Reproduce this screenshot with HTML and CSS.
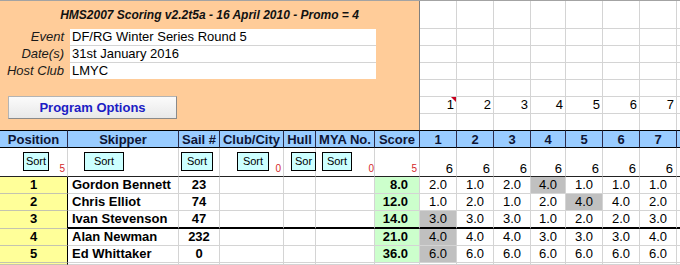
FILE: index.html
```html
<!DOCTYPE html>
<html>
<head>
<meta charset="utf-8">
<title>HMS2007 Scoring</title>
<link rel="stylesheet" href="styles.css">
</head>
<body>
<div class="sheet">
  <div class="panel">
    <div class="title">HMS2007 Scoring v2.2t5a - 16 April 2010 - Promo = 4</div>
    <div class="info">
      <div class="info-row"><span class="lbl">Event</span><span class="val">DF/RG Winter Series Round 5</span></div>
      <div class="info-row"><span class="lbl">Date(s)</span><span class="val">31st January 2016</span></div>
      <div class="info-row last"><span class="lbl">Host Club</span><span class="val">LMYC</span></div>
    </div>
    <button class="prog-btn">Program Options</button>
  </div>

  <div class="gc"></div><div class="gc"></div><div class="gc"></div><div class="gc"></div><div class="gc"></div><div class="gc"></div><div class="gc"></div><div class="gc edge"></div>
  <div class="gc"></div><div class="gc"></div><div class="gc"></div><div class="gc"></div><div class="gc"></div><div class="gc"></div><div class="gc"></div><div class="gc edge"></div>
  <div class="gc"></div><div class="gc"></div><div class="gc"></div><div class="gc"></div><div class="gc"></div><div class="gc"></div><div class="gc"></div><div class="gc edge"></div>
  <div class="gc"></div><div class="gc"></div><div class="gc"></div><div class="gc"></div><div class="gc"></div><div class="gc"></div><div class="gc"></div><div class="gc edge"></div>
  <div class="gc"></div><div class="gc"></div><div class="gc"></div><div class="gc"></div><div class="gc"></div><div class="gc"></div><div class="gc"></div><div class="gc edge"></div>
  <div class="gc num note">1</div><div class="gc num">2</div><div class="gc num">3</div><div class="gc num">4</div><div class="gc num">5</div><div class="gc num">6</div><div class="gc num">7</div><div class="gc edge"></div>
  <div class="gc nb"></div><div class="gc nb"></div><div class="gc nb"></div><div class="gc nb"></div><div class="gc nb"></div><div class="gc nb"></div><div class="gc nb"></div><div class="gc nb edge"></div>

  <div class="hd">Position</div>
  <div class="hd">Skipper</div>
  <div class="hd">Sail #</div>
  <div class="hd">Club/City</div>
  <div class="hd">Hull</div>
  <div class="hd">MYA No.</div>
  <div class="hd">Score</div>
  <div class="hd">1</div>
  <div class="hd">2</div>
  <div class="hd">3</div>
  <div class="hd">4</div>
  <div class="hd">5</div>
  <div class="hd">6</div>
  <div class="hd">7</div>
  <div class="hd edge"></div>

  <div class="srt"><span class="sort sort-pos">Sort</span><span class="cnt">5</span></div>
  <div class="srt"><span class="sort sort-skip">Sort</span></div>
  <div class="srt"><span class="sort sort-sail">Sort</span></div>
  <div class="srt"><span class="sort sort-club">Sort</span><span class="cnt">0</span></div>
  <div class="srt"><span class="sort sort-hull">Sor</span></div>
  <div class="srt"><span class="sort sort-mya">Sort</span><span class="cnt cnt-tight">0</span></div>
  <div class="srt"><span class="cnt">5</span></div>
  <div class="srt race">6</div>
  <div class="srt race">6</div>
  <div class="srt race">6</div>
  <div class="srt race">6</div>
  <div class="srt race">6</div>
  <div class="srt race">6</div>
  <div class="srt race">6</div>
  <div class="srt edge"></div>

  <div class="d pos">1</div><div class="d name">Gordon Bennett</div><div class="d sail">23</div><div class="d"></div><div class="d"></div><div class="d"></div><div class="d score">8.0</div>
  <div class="d r">2.0</div><div class="d r">1.0</div><div class="d r">2.0</div><div class="d r disc">4.0</div><div class="d r">1.0</div><div class="d r">1.0</div><div class="d r">1.0</div><div class="d edge"></div>

  <div class="d pos">2</div><div class="d name">Chris Elliot</div><div class="d sail">74</div><div class="d"></div><div class="d"></div><div class="d"></div><div class="d score">12.0</div>
  <div class="d r">1.0</div><div class="d r">2.0</div><div class="d r">1.0</div><div class="d r">2.0</div><div class="d r disc">4.0</div><div class="d r">4.0</div><div class="d r">2.0</div><div class="d edge"></div>

  <div class="d pos">3</div><div class="d name cut">Ivan Stevenson</div><div class="d sail cut">47</div><div class="d cut"></div><div class="d cut"></div><div class="d cut"></div><div class="d score cut">14.0</div>
  <div class="d r disc cut">3.0</div><div class="d r cut">3.0</div><div class="d r cut">3.0</div><div class="d r cut">1.0</div><div class="d r cut">2.0</div><div class="d r cut">2.0</div><div class="d r cut">3.0</div><div class="d edge cut"></div>

  <div class="d pos">4</div><div class="d name">Alan Newman</div><div class="d sail">232</div><div class="d"></div><div class="d"></div><div class="d"></div><div class="d score">21.0</div>
  <div class="d r disc">4.0</div><div class="d r">4.0</div><div class="d r">4.0</div><div class="d r">3.0</div><div class="d r">3.0</div><div class="d r">3.0</div><div class="d r">4.0</div><div class="d edge"></div>

  <div class="d pos">5</div><div class="d name">Ed Whittaker</div><div class="d sail">0</div><div class="d"></div><div class="d"></div><div class="d"></div><div class="d score">36.0</div>
  <div class="d r disc">6.0</div><div class="d r">6.0</div><div class="d r">6.0</div><div class="d r">6.0</div><div class="d r">6.0</div><div class="d r">6.0</div><div class="d r">6.0</div><div class="d edge"></div>

  <div class="d pos"></div><div class="d"></div><div class="d"></div><div class="d"></div><div class="d"></div><div class="d"></div><div class="d"></div>
  <div class="d"></div><div class="d"></div><div class="d"></div><div class="d"></div><div class="d"></div><div class="d"></div><div class="d"></div><div class="d edge"></div>
</div>
</body>
</html>
```

FILE: styles.css
```css
* { box-sizing: border-box; }

html, body {
  margin: 0;
  padding: 0;
  background: #ffffff;
}

body {
  font-family: "Liberation Sans", Arial, sans-serif;
  font-size: 13px;
  color: #000;
}

.sheet {
  width: 680px;
  height: 265px;
  overflow: hidden;
  display: grid;
  grid-template-columns: 68px 111px 41px 64px 32px 59px 45px 37px 37px 37px 35px 37px 37px 37px 3px;
  grid-template-rows: 28px 17px 17px 17px 17px 17px 16px 18px 29px 17px 17px 18px 17px 17px 1fr;
  border-top: 1px solid #a3a3a3;
}

/* ---------- orange header panel ---------- */
.panel {
  grid-column: 1 / 8;
  grid-row: 1 / 8;
  background: #ffcc99;
  border-right: 1px solid #7f7f7f;
  display: flex;
  flex-direction: column;
}

.title {
  height: 28px;
  line-height: 28px;
  text-align: center;
  font-size: 12px;
  font-weight: bold;
  font-style: italic;
  color: #111;
}

.info-row {
  display: flex;
  height: 17px;
}

.info-row.last {
  height: 16px;
}

.lbl {
  width: 70px;
  padding-right: 6px;
  text-align: right;
  font-style: italic;
  line-height: 16px;
  color: #1a1a1a;
}

.val {
  width: 306px;
  background: #fff;
  border-bottom: 1px solid #d4d4d4;
  padding-left: 2px;
  line-height: 16px;
}

.info-row.last .val {
  border-bottom: none;
}

.prog-btn {
  margin: 17px 0 0 8px;
  width: 169px;
  height: 23px;
  padding: 0;
  font-family: "Liberation Sans", Arial, sans-serif;
  font-size: 13px;
  font-weight: bold;
  color: #1c1cc4;
  background: linear-gradient(#fbfbfb, #e8e8e8);
  border: 1px solid #b4b4b4;
  border-right-color: #8a8a8a;
  border-bottom-color: #8a8a8a;
  border-radius: 0;
}

/* ---------- empty grid cells above race columns ---------- */
.gc {
  background: #fff;
  border-right: 1px solid #d4d4d4;
  border-bottom: 1px solid #d4d4d4;
}

.gc.nb {
  border-bottom: none;
}

.edge {
  border-right: none !important;
}

.num {
  position: relative;
  text-align: right;
  padding-right: 2px;
  line-height: 16px;
}

.note::after {
  content: "";
  position: absolute;
  top: 0;
  right: 0;
  border-top: 5px solid #c8001e;
  border-left: 5px solid transparent;
}

/* ---------- table header ---------- */
.hd {
  background: #99ccff;
  border-top: 1px solid #000;
  border-bottom: 1px solid #000;
  border-right: 1px solid #2b2b4a;
  font-weight: bold;
  text-align: center;
  line-height: 16px;
  padding-top: 1px;
  color: #0e1535;
  white-space: nowrap;
}

/* ---------- sort row ---------- */
.srt {
  display: flex;
  align-items: flex-start;
  padding-top: 4px;
  background: #fff;
  border-right: 1px solid #d4d4d4;
  border-bottom: 1px solid #222;
}

.sort {
  display: block;
  flex: none;
  height: 19px;
  padding-top: 1px;
  background: #ccffff;
  border: 1px solid #000;
  font-size: 11px;
  line-height: 15px;
  color: #000;
  text-align: center;
  overflow: hidden;
  white-space: nowrap;
}

.sort-pos { margin-left: 23px; width: 26px; }
.sort-skip { margin-left: 16px; width: 40px; }
.sort-sail { margin-left: 2px; width: 32px; }
.sort-club { margin-left: 17px; width: 32px; }
.sort-hull { margin-left: 7px; width: 25px; }
.sort-mya { margin-left: 6px; width: 30px; }

.cnt {
  margin-left: auto;
  align-self: flex-end;
  font-size: 10px;
  line-height: 12px;
  padding: 0 2px 1px 0;
  color: #d42a2a;
}

.cnt-tight {
  padding-right: 0;
}

.srt.race {
  align-items: flex-end;
  justify-content: flex-end;
  padding: 0 3px 0 0;
  line-height: 15px;
}

/* ---------- data rows ---------- */
.d {
  background: #fff;
  border-right: 1px solid #d4d4d4;
  border-bottom: 1px solid #d4d4d4;
  line-height: 16px;
  white-space: nowrap;
  overflow: hidden;
}

.d.pos {
  background: #ffff99;
  border-right: 1px solid #000;
  border-bottom-color: #c4c4b0;
  font-weight: bold;
  text-align: center;
}

.d.name {
  font-weight: bold;
  padding-left: 4px;
}

.d.sail {
  font-weight: bold;
  text-align: center;
}

.d.score {
  background: #ccffcc;
  font-weight: bold;
  text-align: right;
  padding-right: 11px;
}

.d.r {
  text-align: center;
}

.d.r.disc {
  background: #c0c0c0;
}

.d.cut {
  border-bottom: 2px solid #000;
}
```
